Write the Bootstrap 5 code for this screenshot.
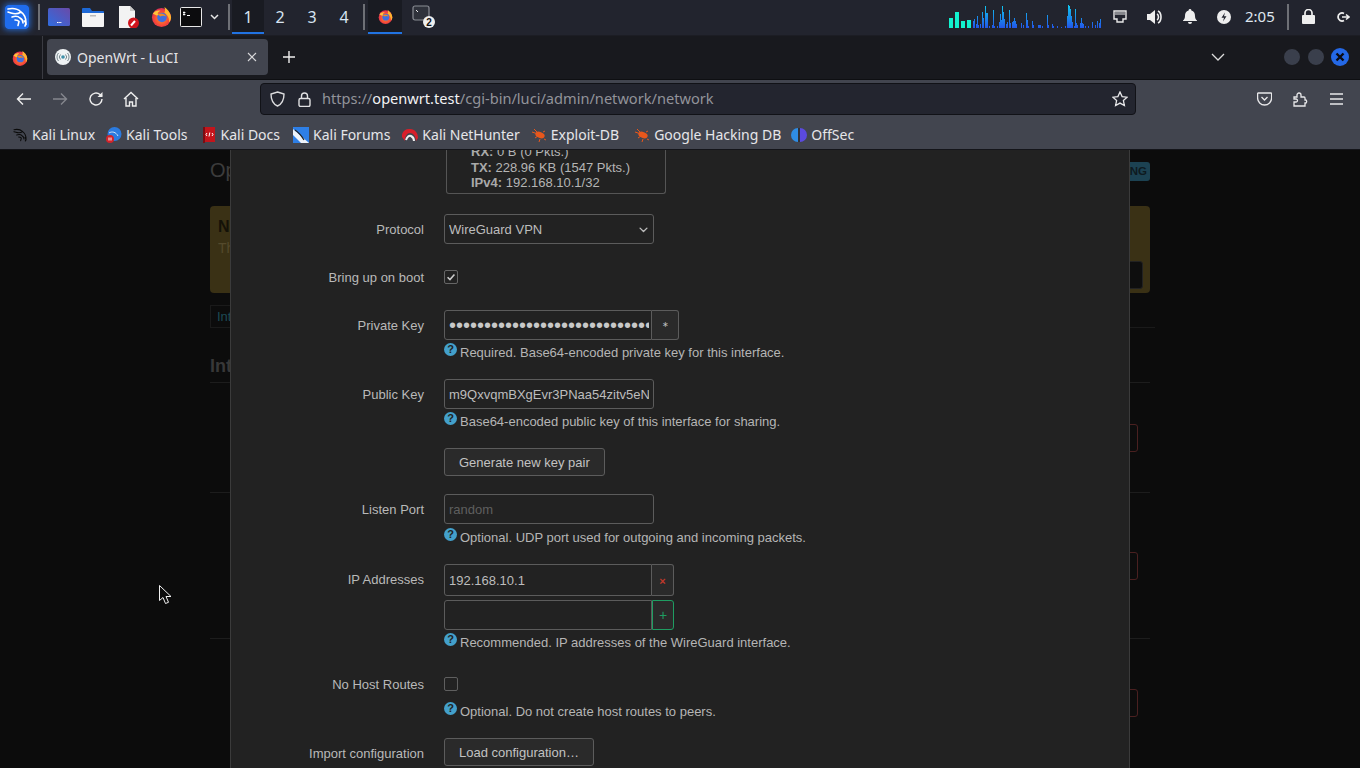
<!DOCTYPE html>
<html lang="en">
<head>
<meta charset="utf-8">
<title>OpenWrt - LuCI</title>
<link rel="stylesheet" href="https://cdn.jsdelivr.net/npm/bootstrap@5.3.0/dist/css/bootstrap.min.css">
<style>
html,body{height:100%;overflow:hidden;background:#0c0c0c}
body{font-family:"Noto Sans",sans-serif;font-size:14px}
svg{display:block;flex:none}
.defs-holder{position:absolute}
.desk-panel{height:36px;background:#22242e;color:#d6dbe6;padding:0 0 2px 5px;border-bottom:1px solid #1c1d24}
.sep{width:2px;height:26px;background:#6e7076;flex:none}
.g2{margin-left:2px}.g3{margin-left:3px}.g8{margin-left:8px}.g9{margin-left:9px}.g10{margin-left:10px}.g11{margin-left:11px}.g12{margin-left:12px}.g14{margin-left:14px}.g19{margin-left:19px}.g20{margin-left:20px}.g13{margin-left:13px}.g15{margin-left:15px}
.kali-logo{border-radius:3px;box-shadow:0 0 6px 1px rgba(40,125,255,.75)}
.ws{width:32px;height:34px;align-self:flex-start;font-size:16px;color:#d8e4f2;display:flex;align-items:center;justify-content:center;flex:none}
.ws-on{background:#191b22;border-bottom:2px solid #2173e2;padding-top:2px}
.task{width:34px;height:34px;align-self:flex-start;background:#191b22;border-bottom:2px solid #2173e2;display:flex;align-items:center;justify-content:center;flex:none}
.clock{font-size:15px;color:#dfe6ef;margin-left:14px;width:42px}
.ic-logout{margin:0 10px 0 21px}
.tab-strip{height:43px;background:#18191e;padding-top:3px;position:relative}
.ff-cell{width:43px;height:43px;margin-top:-3px;padding-right:2px;border-right:1px solid #3a3b42;flex:none}
.tab-on{width:221px;height:36px;margin-left:4px;background:#42454f;border-radius:4px;color:#e4e4e7;padding:0 8px;flex:none}
.tab-title{margin-left:6px;font-size:14px;flex:1}
.ic-close{margin-right:3px}
.ic-plus{margin:12px 0 0 15px}
.ic-tabs{margin:14px 0 0 auto}
.win-group{margin:9px 11px 0 52px}
.win-dot{width:18px;height:18px;border-radius:50%;background:#3a3f4c;border:1px solid #17181c;margin-left:6px;flex:none}
.win-close{background:#2468e6;display:flex;align-items:center;justify-content:center;border:0}
.nav-row{height:36px;background:#42454f;border-top:1px solid #0e0f12;color:#e8e8ea;padding-top:3px;position:relative}
.ic-back{margin:9px 0 0 16px}
.ic-fwd{margin:9px 0 0 20px}
.ic-reload{margin:8px 0 0 20px}
.ic-home{margin:8px 0 0 19px}
.url-box{width:876px;height:32px;margin-left:121px;background:#23252f;border:1px solid #111217;border-radius:4px;flex:none}
.ic-shield{margin-left:9px}
.ic-lock{margin-left:13px}
.url-text{margin-left:11px;font-size:14.6px;color:#92939a;flex:1;white-space:nowrap}
.url-host{color:#f2f2f4}
.ic-star{margin-right:7px}
.ic-pocket{margin:9px 0 0 121px}
.ic-ext{margin:8px 0 0 21px}
.ic-menu{margin:10px 0 0 22px}
.book-row{height:35px;background:#42454f;padding:5px 0 0 12px;color:#e6e6e9;font-size:14px;border-bottom:1px solid #14151a}
.book{gap:4px;margin-right:13px;white-space:nowrap}
.book-a{margin-right:11px}.book-f{margin-right:12px}.book-n{margin-right:11px}.book-e{margin-right:15px}.book-g{margin-right:10px}
.stage{position:relative;height:618px;overflow:hidden;background:#0c0c0c;font-family:"Liberation Sans",sans-serif}
.under{width:940px;margin-left:210px;position:relative}
.under-title{height:56px;padding-top:5px;color:#3c3c3c;font-size:20px}
.under-badge{margin-top:7px;height:19px;padding:0 3px 0 20px;background:#1c4252;color:#0e1a20;font-size:11.5px;font-weight:700;border-radius:3px;line-height:19px}
.under-note{height:87px;background:#3a3115;border-radius:4px;padding:10px 8px;position:relative}
.under-note b{font-size:16px;color:#141208;display:block;line-height:22px}
.under-note span{font-size:14px;color:#544a2c;display:block}
.under-notebtn{position:absolute;right:7px;bottom:4px;width:70px;height:28px;background:#0e0e0e;border:1px solid #222;border-radius:3px}
.under-tabs{margin-top:12px;height:23px;width:945px;border-bottom:1px solid #1a1a1a}
.under-tab{display:inline-block;height:23px;padding:3px 6px;border:1px solid #1a1a1a;border-bottom:0;color:#1d4a55;font-size:13px;line-height:15px}
.under-h{margin-top:25px;height:30px;font-size:18px;font-weight:700;color:#383838;border-bottom:1px solid #1d1d1d}
.under-sec{border-bottom:1px solid #1d1d1d;position:relative}
.sec-a{height:110px}.sec-b{height:146px}.sec-c{height:146px}
.under-red{position:absolute;right:12px;width:40px;height:28px;border:1px solid #4a2020;border-radius:3px}
.red-a{top:41px}.red-b{top:59px}.red-c{top:50px}
.dlg{position:absolute;left:230px;top:0;bottom:0;width:900px;background:#222;border-left:1px solid #3b3b3b;border-right:1px solid #3b3b3b;color:#b9b9b9;font-size:13px;overflow:hidden}
.dlg-stack{gap:18px;margin-top:-24px}
.stat-box{width:220px;height:68px;margin-left:215px;margin-bottom:2px;border:1px solid #555;border-top:0;border-radius:0 0 3px 3px;padding:0 0 2px 24px;line-height:15.6px;color:#b5b5b5;display:flex;flex-direction:column;justify-content:flex-end}
.stat-box b{color:#a9a9a9}
.fld-label{width:193px;text-align:right;line-height:32px;flex:none;margin:0}
.fld-label-h{height:30px}
.fld-body{margin-left:20px}
.lucictl{width:210px;height:30px;background-color:#222;border:1px solid #5c5c5c;border-radius:3px;color:#bdbdbd;font-family:"Liberation Sans",sans-serif;font-size:13px;padding:3px 4px;box-shadow:none}
.lucictl::placeholder{color:#5f5f5f}
select.lucictl{padding:4px 4px 2px;background-image:url("data:image/svg+xml,%3csvg xmlns='http://www.w3.org/2000/svg' viewBox='0 0 16 16'%3e%3cpath fill='none' stroke='%23bbb' stroke-linecap='round' stroke-linejoin='round' stroke-width='2' d='m3 6 5 5 5-5'/%3e%3c/svg%3e");background-size:11px 11px;background-position:right 4px center;background-repeat:no-repeat}
.ctl-joined{width:208px;flex:none;border-radius:3px 0 0 3px}
.ctl-secret{font-size:20px;padding:0 2px 0 4px;color:#c8c8c8}
.ctl-tall{height:32px}
.ctl-side{width:27px;height:30px;padding:0;font-size:8px;line-height:1;background:#2a2a2a;border:1px solid #5c5c5c;border-left:0;border-radius:0 3px 3px 0;color:#c0c0c0;flex:none}
.side-narrow{width:22px}
.side-tall{height:32px;color:#c0392b;font-weight:700;font-size:11px;border-color:#5c5c5c;padding-top:2px}
.side-add{border:1px solid #1f9d62;color:#1f9d62;border-radius:0 3px 3px 0;font-size:14px;width:22px}
.ip-gap{height:4px}
input.lucibox.form-check-input{width:14px;height:14px;margin:0;background-color:#222;border:1px solid #5f5f5f;border-radius:2px;box-shadow:none}
input.lucibox.form-check-input:checked{background-color:#222;border-color:#666;background-image:url("data:image/svg+xml,%3csvg xmlns='http://www.w3.org/2000/svg' viewBox='0 0 14 14'%3e%3cpath fill='none' stroke='%23ccc' stroke-width='1.8' d='M3 7.200l2.800 2.800L11 4'/%3e%3c/svg%3e")}
.box-cell{height:30px}
.help-line{line-height:15px;padding-top:5px;height:21px;color:#b5b5b5;white-space:nowrap}
.help-ic{display:inline-flex;width:13px;height:13px;border-radius:50%;background:#43a0cb;color:#222;font-size:11px;font-weight:700;align-items:center;justify-content:center;margin-right:3px;position:relative;top:-4px;vertical-align:middle}
.help-port{height:22px;padding-top:6px}
.luci-btn{height:28px;padding:1px 14px 0;font-size:13px;line-height:25px;background:#2a2a2a;border:1px solid #5c5c5c;border-radius:3px;color:#c2c2c2;font-family:"Liberation Sans",sans-serif}
.ptr{position:absolute;left:159px;top:435px}
</style>
</head>
<body>
<svg class="defs-holder" width="0" height="0">
 <defs>
  <radialGradient id="ffg" cx="50%" cy="55%" r="55%"><stop offset="0" stop-color="#ff9a1f"/><stop offset=".7" stop-color="#f5453a"/><stop offset="1" stop-color="#d9305a"/></radialGradient>
  <linearGradient id="gr" gradientUnits="userSpaceOnUse" x1="0" y1="10" x2="0" y2="34"><stop offset="0" stop-color="#0fd0f0"/><stop offset="1" stop-color="#2256e8"/></linearGradient>
  <symbol id="ff" viewBox="0 0 22 22">
   <circle cx="11" cy="12" r="10" fill="url(#ffg)"/>
   <path d="M14 1c4 3 7 7 7 11 0 2-1 4-2 5 0-4-1-7-5-10 1-2 1-4 0-6z" fill="#ffb62e"/>
   <path d="M2 8c2-3 5-4 8-3-2 1-3 2-3 3l4 1c-1 1-3 1-5 1z" fill="#ffc43a"/>
   <circle cx="11.500" cy="12" r="5" fill="#3f6fe0"/>
   <path d="M7 9c3-2 7-1 9 2-2-1-5-1-6 0z" fill="#f58a1f"/>
  </symbol>
  <symbol id="drg" viewBox="0 0 24 24">
   <path d="M3 4c5-1 10 0 13 3 3 2 5 6 5 11l-1.500-2M21 18l-1 3M16 7c-3 2-7 2-10 1M6 8l-3-1M7 12c3-1 6-1 8 1 2 1 3 3 3 5M10 15c2 0 3 0 4 1.500M14 16.500l-1 4" fill="none" stroke="currentColor" stroke-width="1.600" stroke-linecap="round"/>
  </symbol>
  <symbol id="bug" viewBox="0 0 16 16">
   <ellipse cx="9" cy="8" rx="4.800" ry="3" fill="#e8571c" transform="rotate(20 9 8)"/>
   <path d="M1 5l6 2M3 2l4 4M13 12l2 1M9 12l-1 3M12 5l2-1M4 11l3-2" stroke="#e8571c" stroke-width="1" fill="none"/>
  </symbol>
 </defs>
</svg>

<div class="desk-panel d-flex align-items-center">
 <svg class="kali-logo" width="24" height="24" viewBox="0 0 24 24"><rect width="24" height="24" rx="3" fill="#1f6cec"/><use href="#drg" color="#fff"/></svg>
 <div class="sep g9"></div>
 <svg class="g8" width="22" height="18" viewBox="0 0 22 18"><defs><linearGradient id="wg" x1="0" y1="1" x2="1" y2="0"><stop offset="0" stop-color="#2f6de0"/><stop offset="1" stop-color="#6a4aa8"/></linearGradient></defs><rect width="22" height="18" rx="1.500" fill="url(#wg)"/><path d="M9 14.500h1.200M10.600 14.500h1.200M12.200 14.500h1.200" stroke="#fff" stroke-width="1.200"/></svg>
 <svg class="g12" width="22" height="20" viewBox="0 0 22 20"><path d="M0 2a1 1 0 0 1 1-1h7l2 3h11a1 1 0 0 1 1 1v3H0z" fill="#1d68d6"/><path d="M0 6h22v13a1 1 0 0 1-1 1H1a1 1 0 0 1-1-1z" fill="#f4f4f4"/><path d="M8 8h6v1.500H8z" fill="#bbb"/></svg>
 <svg class="g14" width="22" height="22" viewBox="0 0 22 22"><path d="M1 0h11l5 5v17H1z" fill="#f3f3f3"/><path d="M12 0l5 5h-5z" fill="#c9c9c9"/><circle cx="15.500" cy="17" r="5.500" fill="#d0141c"/><path d="M13 19.500l4-4.500" stroke="#fff" stroke-width="2"/></svg>
 <svg class="g11" width="21" height="21"><use href="#ff"/></svg>
 <svg class="g8" width="22" height="20" viewBox="0 0 22 20"><rect x=".5" y=".5" width="21" height="19" rx="1" fill="#0c0c0e" stroke="#e8e8e8"/><path d="M4 4.500v4M3 5.500h2.400M3 7.500h2.400M7 8.500h3" stroke="#fff" stroke-width="1"/></svg>
 <svg class="g8" width="9" height="6" viewBox="0 0 9 6"><path d="M1 1l3.500 3.500L8 1" stroke="#e6e6e6" stroke-width="1.500" fill="none"/></svg>
 <div class="sep g9"></div>
 <div class="ws ws-on g2">1</div>
 <div class="ws">2</div>
 <div class="ws">3</div>
 <div class="ws">4</div>
 <div class="sep g3"></div>
 <div class="task g3"><svg width="15" height="15"><use href="#ff"/></svg></div>
 <svg class="g10" width="24" height="24" viewBox="0 0 24 24"><rect x="1" y="1" width="16" height="14" rx="2" fill="#2f323b" stroke="#8a8d94" stroke-width="1.200"/><path d="M4 5l2 2" stroke="#eee"/><circle cx="17" cy="17" r="6" fill="#eee"/><text x="17" y="20.500" font-size="10" font-weight="700" text-anchor="middle" fill="#111" font-family="Liberation Sans">2</text></svg>

 <svg class="ms-auto" width="152" height="24" viewBox="950 11 152 24">
  <path d="M950 24h4v10h-4zM956 18h4v16h-4zM962 27h4v7h-4zM968 26h4v8h-4z" fill="#12f2cf"/>
  <path fill="none" stroke="url(#gr)" d="M974.500 34V27M975.500 34V25M977.500 34V30M978.500 34V22M979.500 34V31M981.500 34V30M983.500 34V18M984.500 34V24M986.500 34V12M987.500 34V19M988.500 34V19M990.500 34V32M993.500 34V31M994.500 34V16M995.500 34V32M998.500 34V32M1000.500 34V28M1001.500 34V20M1002.500 34V26M1003.500 34V12M1004.500 34V18M1005.500 34V25M1007.500 34V30M1008.500 34V28M1010.500 34V16M1011.500 34V29M1013.500 34V28M1014.500 34V27M1015.500 34V24M1016.500 34V27M1017.500 34V30M1022.500 34V29M1024.500 34V31M1027.500 34V19M1028.500 34V26M1029.500 34V32M1033.500 34V27M1034.500 34V31M1039.500 34V31M1040.500 34V31M1041.500 34V31M1043.500 34V32M1048.500 34V21M1049.500 34V31M1053.500 34V30M1054.500 34V32M1058.500 34V32M1062.500 34V33M1066.500 34V32M1068.500 34V22M1069.500 34V11M1070.500 34V12M1071.500 34V15M1072.500 34V22M1073.500 34V28M1075.500 34V32M1076.500 34V15M1077.500 34V29M1078.500 34V31M1081.500 34V29M1082.500 34V24M1083.500 34V29M1084.500 34V30M1086.500 34V32M1089.500 34V32M1093.500 34V28M1096.500 34V31M1098.500 34V27M1100.500 34V29M1101.500 34V25"/>
 </svg>
 <svg class="g12" width="14" height="13" viewBox="0 0 14 13"><path d="M1 1h12v8h-3v3H4V9H1z" fill="none" stroke="#e8e8e8" stroke-width="1.400"/><path d="M3 2v3M5 2v3M7 2v3M9 2v3M11 2v3" stroke="#e8e8e8"/></svg>
 <svg class="g20" width="17" height="16" viewBox="0 0 17 16"><path d="M0 5h3l5-4v14l-5-4H0z" fill="#eee"/><path d="M11 2c4 2 4 10 0 12M10 5c2 1 2 5 0 6" fill="none" stroke="#eee" stroke-width="1.600"/></svg>
 <svg class="g19" width="14" height="15" viewBox="0 0 14 15"><path d="M7 0a1.400 1.400 0 0 1 1.400 1.400C11 2.200 12 4 12 7c0 2.200.8 3.400 2 4.500V12H0v-.5C1.200 10.400 2 9.200 2 7c0-3 1-4.800 3.600-5.600A1.400 1.400 0 0 1 7 0zM5 13h4a2 2 0 0 1-4 0z" fill="#eee"/></svg>
 <svg class="g20" width="14" height="14" viewBox="0 0 14 14"><circle cx="7" cy="7" r="7" fill="#eee"/><path d="M8 2.500L4.500 7.800H7L6 11.500l3.500-5.300H7z" fill="#22242e"/></svg>
 <div class="clock">2:05</div>
 <div class="sep"></div>
 <svg class="g13" width="13" height="15" viewBox="0 0 13 15"><path d="M3 6V4a3.500 3.500 0 0 1 7 0v2" fill="none" stroke="#eee" stroke-width="1.700"/><rect y="6" width="13" height="9" rx="1" fill="#eee"/></svg>
 <svg class="ic-logout" width="14" height="12" viewBox="0 0 14 12"><path d="M8 2.500A4 4 0 1 0 8 9.500" fill="none" stroke="#eee" stroke-width="1.800"/><path d="M6 6h6M10 3.500L13 6l-3 2.500" fill="none" stroke="#eee" stroke-width="1.600"/></svg>
</div>

<div class="tab-strip d-flex align-items-start">
 <div class="ff-cell d-flex align-items-center justify-content-center"><svg width="16" height="16"><use href="#ff"/></svg></div>
 <div class="tab-on d-flex align-items-center">
  <svg width="16" height="16" viewBox="0 0 16 16"><circle cx="8" cy="8" r="8" fill="#eef2f4"/><circle cx="8" cy="8" r="1.800" fill="#3d8fa8"/><path d="M5.500 5.500a3.500 3.500 0 0 0 0 5M10.500 5.500a3.500 3.500 0 0 1 0 5M3.500 4a6 6 0 0 0 0 8M12.500 4a6 6 0 0 1 0 8" fill="none" stroke="#7a8a90" stroke-width="1"/></svg>
  <span class="tab-title">OpenWrt - LuCI</span>
  <svg class="ic-close" width="10" height="10" viewBox="0 0 10 10"><path d="M1 1l8 8M9 1l-8 8" stroke="#d8d8da" stroke-width="1.100"/></svg>
 </div>
 <svg class="ic-plus" width="12" height="12" viewBox="0 0 12 12"><path d="M6 0v12M0 6h12" stroke="#eee" stroke-width="1.400"/></svg>
 <svg class="ic-tabs" width="14" height="8" viewBox="0 0 14 8"><path d="M1 1l6 6 6-6" stroke="#ddd" stroke-width="1.300" fill="none"/></svg>
 <div class="d-flex win-group">
  <div class="win-dot"></div><div class="win-dot"></div>
  <div class="win-dot win-close"><svg width="10" height="10" viewBox="0 0 10 10"><path d="M1.500 1.500l7 7M8.500 1.500l-7 7" stroke="#0b0b12" stroke-width="2.400"/></svg></div>
 </div>
</div>

<div class="nav-row d-flex align-items-start">
 <svg class="ic-back" width="16" height="14" viewBox="0 0 16 14"><path d="M15 7H2M7 1.500L1.500 7 7 12.500" fill="none" stroke="#eee" stroke-width="1.400"/></svg>
 <svg class="ic-fwd" width="16" height="14" viewBox="0 0 16 14"><path d="M1 7h13M9 1.500L14.500 7 9 12.500" fill="none" stroke="#85878e" stroke-width="1.400"/></svg>
 <svg class="ic-reload" width="16" height="16" viewBox="0 0 16 16"><path d="M14 8a6 6 0 1 1-2-4.500L14 5" fill="none" stroke="#eee" stroke-width="1.400"/><path d="M14.500 1v5h-5z" fill="#eee"/></svg>
 <svg class="ic-home" width="16" height="16" viewBox="0 0 16 16"><path d="M1 8l7-6.500L15 8M3 7v8h3.500v-4h3v4H13V7" fill="none" stroke="#eee" stroke-width="1.400"/></svg>
 <div class="url-box d-flex align-items-center">
  <svg class="ic-shield" width="15" height="16" viewBox="0 0 15 16"><path d="M7.500 1L14 3c0 6-2 10-6.500 12C3 13 1 9 1 3z" fill="none" stroke="#dcdcde" stroke-width="1.400"/></svg>
  <svg class="ic-lock" width="13" height="15" viewBox="0 0 13 15"><path d="M3.500 6V4a3 3 0 0 1 6 0v2" fill="none" stroke="#e0e0e2" stroke-width="1.400"/><rect x="1" y="6.500" width="11" height="8" rx="1.500" fill="none" stroke="#e0e0e2" stroke-width="1.400"/></svg>
  <span class="url-text">https://<span class="url-host">openwrt.test</span>/cgi-bin/luci/admin/network/network</span>
  <svg class="ic-star" width="16" height="16" viewBox="0 0 16 16"><path d="M8 1l2.100 4.600 5 .6-3.700 3.400 1 5L8 12.100 3.600 14.600l1-5L.9 6.200l5-.6z" fill="none" stroke="#e8e8ea" stroke-width="1.300"/></svg>
 </div>
 <svg class="ic-pocket" width="15" height="14" viewBox="0 0 15 14"><path d="M1 1h13a.6.6 0 0 1 .6.6V6a7 7 0 0 1-14 0V1.600A.6.6 0 0 1 1 1z" fill="none" stroke="#e8e8ea" stroke-width="1.300"/><path d="M4.500 5l3 3 3-3" fill="none" stroke="#e8e8ea" stroke-width="1.300"/></svg>
 <svg class="ic-ext" width="15" height="16" viewBox="0 0 15 16"><path d="M1 6h3V4a2 2 0 0 1 4 0v2h3a1 1 0 0 1 1 1v2h1a2 2 0 0 1 0 3h-1v3H1v-4h2a1.500 1.500 0 0 0 0-3H1z" fill="none" stroke="#e8e8ea" stroke-width="1.300"/></svg>
 <svg class="ic-menu" width="13" height="12" viewBox="0 0 13 12"><path d="M0 1h13M0 6h13M0 11h13" stroke="#e8e8ea" stroke-width="1.300"/></svg>
</div>

<div class="book-row d-flex align-items-center">
 <div class="book book-a d-flex align-items-center"><svg width="16" height="16"><use href="#drg" color="#0b0b0b"/></svg>Kali Linux</div>
 <div class="book d-flex align-items-center"><svg width="16" height="16" viewBox="0 0 16 16"><circle cx="8.500" cy="7" r="7" fill="#2b7be0"/><path d="M3 6c3-2 7-1 9 3" stroke="#cfe3fa" fill="none"/><circle cx="4" cy="12" r="4" fill="#d2232a"/><path d="M3 10.500v3M5 10.500v3" stroke="#fff"/></svg>Kali Tools</div>
 <div class="book d-flex align-items-center"><svg width="16" height="16" viewBox="0 0 16 16"><rect x="2" y="0" width="12" height="15" fill="#c3151c"/><rect x="2" y="0" width="2" height="16" fill="#7a0d12"/><path d="M6 6L5 7.500 6 9M11 6l1 1.500L11 9M8.800 5.500L8 9.500" stroke="#fff" fill="none"/></svg>Kali Docs</div>
 <div class="book book-f d-flex align-items-center"><svg width="16" height="16" viewBox="0 0 16 16"><rect width="16" height="16" fill="#2e7fe6"/><path d="M0 2l16 14H8L0 8z" fill="#eef3f9"/><path d="M2 3c3 2 6 5 9 10" stroke="#222" stroke-width="1.200" fill="none"/></svg>Kali Forums</div>
 <div class="book book-n d-flex align-items-center"><svg width="16" height="16" viewBox="0 0 16 16"><path d="M8 2a7 7 0 0 0-8 8l3 4C3 9 5 6 8 6s6 3 6 8l2-3c0-5-3-9-8-9z" fill="#d81f2a"/><path d="M4 13c1-3 3-5 5-4s3 3 3 5" stroke="#eee" stroke-width="2" fill="none"/></svg>Kali NetHunter</div>
 <div class="book book-e d-flex align-items-center"><svg width="16" height="16"><use href="#bug"/></svg>Exploit-DB</div>
 <div class="book book-g d-flex align-items-center"><svg width="16" height="16"><use href="#bug"/></svg>Google Hacking DB</div>
 <div class="book d-flex align-items-center"><svg width="16" height="16" viewBox="0 0 16 16"><path d="M7 1a7 7 0 0 0 0 14z" fill="#2f8de4"/><path d="M9 1a7 7 0 0 1 0 14z" fill="#5b4ae0"/><path d="M8 1v14" stroke="#1e2028"/></svg>OffSec</div>
</div>

<main class="stage">
 <div class="under">
  <div class="under-title d-flex justify-content-between align-items-start"><span>Op</span><span class="under-badge">ING</span></div>
  <div class="under-note"><b>N</b><span>Th</span><div class="under-notebtn"></div></div>
  <div class="under-tabs"><span class="under-tab">Int</span></div>
  <div class="under-h">Int</div>
  <div class="under-sec sec-a"><div class="under-red red-a"></div></div>
  <div class="under-sec sec-b"><div class="under-red red-b"></div></div>
  <div class="under-sec sec-c"><div class="under-red red-c"></div></div>
 </div>

 <div class="dlg">
  <div class="d-flex flex-column dlg-stack">
   <div class="stat-box"><div><b>RX:</b> 0 B (0 Pkts.)</div><div><b>TX:</b> 228.96 KB (1547 Pkts.)</div><div><b>IPv4:</b> 192.168.10.1/32</div></div>
   <div class="d-flex"><label class="fld-label fld-label-h">Protocol</label><div class="fld-body"><select class="form-select lucictl"><option>WireGuard VPN</option></select></div></div>
   <div class="d-flex"><label class="fld-label fld-label-h">Bring up on boot</label><div class="fld-body box-cell d-flex align-items-center"><input class="form-check-input lucibox" type="checkbox" checked></div></div>
   <div class="d-flex"><label class="fld-label fld-label-h">Private Key</label><div class="fld-body">
     <div class="d-flex"><input class="form-control lucictl ctl-joined ctl-secret" type="password" value="abcdefghijklmnopqrstuvwxyz0123456789"><button class="btn ctl-side" type="button">∗</button></div>
     <div class="help-line"><span class="help-ic">?</span>Required. Base64-encoded private key for this interface.</div></div></div>
   <div class="d-flex"><label class="fld-label fld-label-h">Public Key</label><div class="fld-body">
     <input class="form-control lucictl" type="text" value="m9QxvqmBXgEvr3PNaa54zitv5eN">
     <div class="help-line"><span class="help-ic">?</span>Base64-encoded public key of this interface for sharing.</div></div></div>
   <div class="d-flex"><div class="fld-label"></div><div class="fld-body"><button class="btn luci-btn" type="button">Generate new key pair</button></div></div>
   <div class="d-flex"><label class="fld-label fld-label-h">Listen Port</label><div class="fld-body">
     <input class="form-control lucictl" type="text" placeholder="random">
     <div class="help-line help-port"><span class="help-ic">?</span>Optional. UDP port used for outgoing and incoming packets.</div></div></div>
   <div class="d-flex"><label class="fld-label fld-label-h">IP Addresses</label><div class="fld-body">
     <div class="d-flex"><input class="form-control lucictl ctl-joined ctl-tall" type="text" value="192.168.10.1"><button class="btn ctl-side side-narrow side-tall" type="button">×</button></div>
     <div class="ip-gap"></div>
     <div class="d-flex"><input class="form-control lucictl ctl-joined" type="text"><button class="btn ctl-side side-add" type="button">+</button></div>
     <div class="help-line"><span class="help-ic">?</span>Recommended. IP addresses of the WireGuard interface.</div></div></div>
   <div class="d-flex"><label class="fld-label fld-label-h">No Host Routes</label><div class="fld-body">
     <div class="box-cell d-flex align-items-center"><input class="form-check-input lucibox" type="checkbox"></div>
     <div class="help-line"><span class="help-ic">?</span>Optional. Do not create host routes to peers.</div></div></div>
   <div class="d-flex"><label class="fld-label fld-label-h">Import configuration</label><div class="fld-body"><button class="btn luci-btn" type="button">Load configuration…</button></div></div>
  </div>
 </div>

 <svg class="ptr" width="14" height="21" viewBox="0 0 14 21"><path d="M.5.500v15l3.500-3 2.500 6 3-1.200-2.500-5.800h5z" fill="#0b0b0b" stroke="#f2f2f2" stroke-width="1"/></svg>
</main>
</body>
</html>
